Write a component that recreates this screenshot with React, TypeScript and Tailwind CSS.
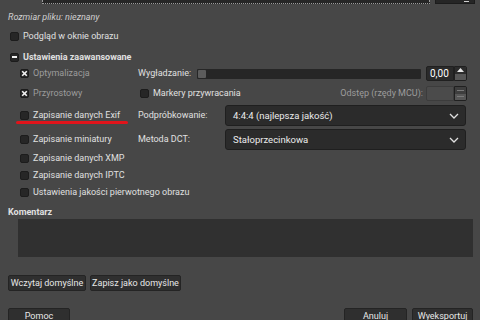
import React from "react";

const Check = ({ state }: { state: "off" | "x" | "minus" }) => (
  <span className="w-[9px] h-[9px] rounded-[2px] bg-[#262626] border border-[#1c1c1c] flex items-center justify-center shrink-0">
    {state === "x" && (
      <svg width="7" height="7" viewBox="0 0 7 7">
        <path d="M1.2 1.2 L5.8 5.8 M5.8 1.2 L1.2 5.8" stroke="#f2f2f2" strokeWidth="1.6" />
      </svg>
    )}
    {state === "minus" && <span className="w-[5px] h-[2px] bg-[#f2f2f2]" />}
  </span>
);

const CheckRow = ({
  label,
  state = "off",
  dim = false,
  bold = false,
}: {
  label: string;
  state?: "off" | "x" | "minus";
  dim?: boolean;
  bold?: boolean;
}) => (
  <div className="flex items-center gap-[4px] whitespace-nowrap">
    <Check state={state} />
    <span className={`${dim ? "text-[#9c9c9c]" : "text-[#e0e0e0]"} ${bold ? "font-bold" : ""}`}>
      {label}
    </span>
  </div>
);

const Spinner = ({ value, disabled = false }: { value: string; disabled?: boolean }) => (
  <div className="flex h-[15px]">
    <div
      className={`w-[28px] rounded-l-[2px] border flex items-center px-[3px] text-[10px] ${
        disabled ? "bg-[#4b4b4b] border-[#3c3c3c]" : "bg-[#2a2a2a] border-[#202020] text-white"
      }`}
    >
      {value}
    </div>
    <div className="w-[13px] flex flex-col border border-[#202020] rounded-r-[2px] overflow-hidden">
      <div className={`flex-1 flex items-center justify-center ${disabled ? "bg-[#3e3e3e]" : "bg-[#2c2c2c]"}`}>
        {disabled ? (
          <span className="w-[7px] h-[1px] bg-[#7a7a7a]" />
        ) : (
          <svg width="7" height="4" viewBox="0 0 7 4">
            <path d="M0 4 L3.5 0 L7 4 Z" fill="#e6e6e6" />
          </svg>
        )}
      </div>
      <div className="flex-1 flex items-center justify-center bg-[#575757]">
        {disabled && <span className="w-[7px] h-[1px] bg-[#7a7a7a]" />}
      </div>
    </div>
  </div>
);

const Select = ({ value }: { value: string }) => (
  <div className="w-[241px] h-[21px] rounded-[3px] bg-[#2b2b2b] border border-[#1f1f1f] flex items-center justify-between pl-[7px] pr-[6px] text-[#ececec] text-[9.5px]">
    <span>{value}</span>
    <svg width="10" height="6" viewBox="0 0 10 6">
      <path d="M1 1 L5 5 L9 1" stroke="#e0e0e0" strokeWidth="1.3" fill="none" />
    </svg>
  </div>
);

const Btn = ({ label, w }: { label: string; w: string }) => (
  <div className={`${w} h-[16px] rounded-[2px] bg-[#2f2f2f] border border-[#242424] flex items-center justify-center whitespace-nowrap text-[#e8e8e8]`}>
    {label}
  </div>
);

export default function App() {
  return (
    <div className="w-[480px] h-[320px] overflow-hidden bg-[#474747] font-['Roboto','Liberation_Sans',sans-serif] text-[9px] leading-none text-[#e0e0e0]">
      {/* cut-off controls above */}
      <div className="flex h-[4px] pl-[42px] gap-[5px]">
        <div className="w-[388px] bg-[#262626] border-x border-b border-dotted border-[#9a9a9a]" />
        <div className="w-[40px] bg-[#262626] border-x border-b border-[#1c1c1c] flex justify-end pr-[5px]">
          <span className="w-[5px] h-[1px] bg-[#cfcfcf] mt-[1px]" />
        </div>
      </div>

      <div className="h-[14px] mt-[6px] pl-[8px] flex items-center italic text-[#cfcfcf]">Rozmiar pliku: nieznany</div>

      <div className="h-[14px] mt-[5px] pl-[10px] flex items-center">
        <CheckRow label="Podgląd w oknie obrazu" />
      </div>

      <div className="h-[14px] mt-[7px] pl-[10px] flex items-center">
        <CheckRow label="Ustawienia zaawansowane" state="minus" bold />
      </div>

      {/* advanced settings */}
      <div className="pl-[20px] pr-[13px]">
        <div className="flex items-center h-[15px] mt-[2px]">
          <div className="w-[118px]">
            <CheckRow label="Optymalizacja" state="x" dim />
          </div>
          <span className="w-[59px]">Wygładzanie:</span>
          <div className="w-[224px] h-[10px] bg-[#262626] rounded-[1px] flex items-center pl-[1px]">
            <span className="w-[8px] h-[8px] bg-[#5c5c5c] rounded-[1px]" />
          </div>
          <div className="ml-[5px]">
            <Spinner value="0,00" />
          </div>
        </div>

        <div className="flex items-center h-[15px] mt-[5px]">
          <div className="w-[120px]">
            <CheckRow label="Przyrostowy" state="x" dim />
          </div>
          <CheckRow label="Markery przywracania" />
          <span className="ml-auto mr-[3px] text-[#9c9c9c]">Odstęp (rzędy MCU):</span>
          <Spinner value="" disabled />
        </div>

        <div className="flex items-center h-[21px] mt-[4px]">
          <div className="w-[118px] relative">
            <CheckRow label="Zapisanie danych Exif" />
            <span className="absolute left-[-4px] top-[10px] w-[112px] h-[3px] rounded-full bg-[#e0141b]" />
          </div>
          <span className="w-[87px]">Podpróbkowanie:</span>
          <Select value="4:4:4 (najlepsza jakość)" />
        </div>

        <div className="flex items-center h-[21px] mt-[3px]">
          <div className="w-[118px]">
            <CheckRow label="Zapisanie miniatury" />
          </div>
          <span className="w-[87px]">Metoda DCT:</span>
          <Select value="Stałoprzecinkowa" />
        </div>

        <div className="h-[17px] flex items-center">
          <CheckRow label="Zapisanie danych XMP" />
        </div>
        <div className="h-[17px] flex items-center">
          <CheckRow label="Zapisanie danych IPTC" />
        </div>
        <div className="h-[17px] flex items-center">
          <CheckRow label="Ustawienia jakości pierwotnego obrazu" />
        </div>
      </div>

      <div className="h-[12px] mt-[5px] pl-[8px] flex items-center font-bold">Komentarz</div>
      <div className="ml-[18px] w-[455px] h-[38px] bg-[#303030] mt-[1px]" />

      <div className="flex gap-[4px] pl-[8px] mt-[18px]">
        <Btn label="Wczytaj domyślne" w="w-[78px]" />
        <Btn label="Zapisz jako domyślne" w="w-[91px]" />
      </div>

      <div className="flex pl-[8px] pr-[7px] mt-[17px]">
        <Btn label="Pomoc" w="w-[62px]" />
        <div className="ml-auto flex gap-[5px]">
          <Btn label="Anuluj" w="w-[63px]" />
          <Btn label="Wyeksportuj" w="w-[61px]" />
        </div>
      </div>
    </div>
  );
}
